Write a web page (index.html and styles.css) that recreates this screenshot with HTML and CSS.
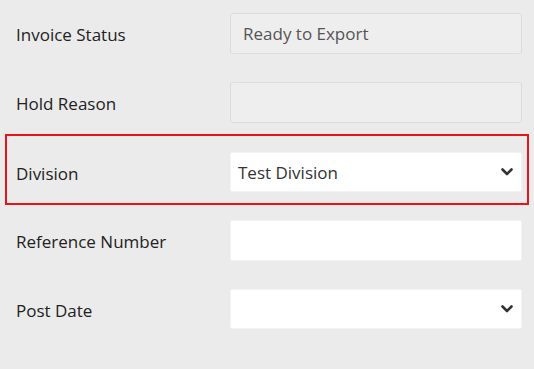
FILE: index.html
```html
<!DOCTYPE html>
<html lang="en">
<head>
    <meta charset="UTF-8">
    <meta name="viewport" content="width=device-width, initial-scale=1.0">
    <title>Invoice Details</title>
    <link rel="stylesheet" href="styles.css">
</head>
<body>
    <!-- Invoice Form -->
    <form class="invoice-form">
        <div class="row">
            <label for="invoiceStatus">Invoice Status</label>
            <input type="text" id="invoiceStatus" class="field" value="Ready to Export" disabled>
        </div>
        <div class="row">
            <label for="holdReason">Hold Reason</label>
            <input type="text" id="holdReason" class="field" disabled>
        </div>
        <div class="row highlight">
            <label for="division">Division</label>
            <div class="select field" id="division">
                <span>Test Division</span>
                <svg class="chevron" width="12" height="8" viewBox="0 0 12 8">
                    <polyline points="1.5,1.5 6,6 10.5,1.5" fill="none" stroke="#333" stroke-width="2.6" stroke-linecap="round" stroke-linejoin="round"/>
                </svg>
            </div>
        </div>
        <div class="row">
            <label for="referenceNumber">Reference Number</label>
            <input type="text" id="referenceNumber" class="field">
        </div>
        <div class="row">
            <label for="postDate">Post Date</label>
            <div class="select field" id="postDate">
                <span></span>
                <svg class="chevron" width="12" height="8" viewBox="0 0 12 8">
                    <polyline points="1.5,1.5 6,6 10.5,1.5" fill="none" stroke="#333" stroke-width="2.6" stroke-linecap="round" stroke-linejoin="round"/>
                </svg>
            </div>
        </div>
    </form>
</body>
</html>
```
FILE: styles.css
```css
body {
    font-family: "Open Sans", "Noto Sans", Arial, sans-serif;
    background-color: #ebebeb;
    margin: 0;
    color: #222;
}
.invoice-form {
    width: 524px;
    padding: 11px 0 0 5px;
}
.row {
    display: flex;
    align-items: center;
    justify-content: space-between;
    padding: 0 5px 0 9px;
    border: 2px solid transparent;
}
.row + .row {
    margin-top: 24px;
}
.row.highlight {
    border-color: #e8141a;
    padding-top: 16px;
    padding-bottom: 11px;
    margin-top: 9px;
}
.row.highlight + .row {
    margin-top: 13px;
}
label {
    font-size: 17px;
    color: #222;
    padding-top: 2px;
}
.field {
    width: 292px;
    height: 41px;
    box-sizing: border-box;
    border: 1px solid #f3f3f3;
    border-radius: 2px;
    background: #fff;
    font-family: inherit;
    font-size: 17px;
    color: #333;
    padding: 0 12px;
    margin: 0;
}
input:disabled {
    background: #eeeeee;
    border-color: #dcdcdc;
    color: #555;
    border-radius: 3px;
}
.select {
    display: flex;
    align-items: center;
    justify-content: space-between;
    height: 40px;
    padding: 0 8px 0 7px;
}
.chevron {
    display: block;
}
```
